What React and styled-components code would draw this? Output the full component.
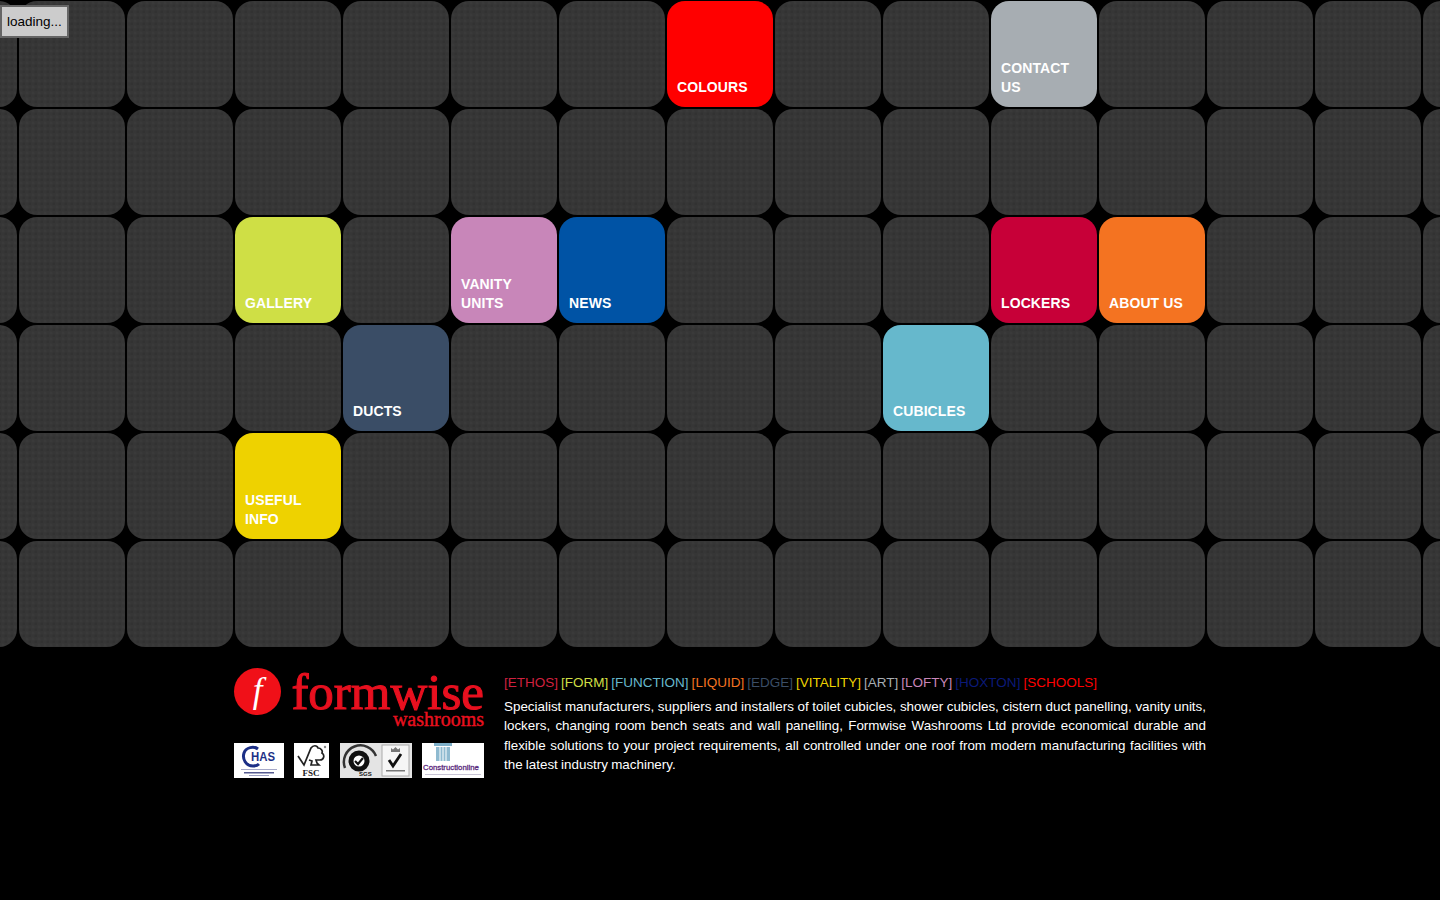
import styled, { createGlobalStyle } from "styled-components";

const GlobalStyle = createGlobalStyle`
  html, body {
    margin: 0;
    padding: 0;
    height: 100%;
    background: #000;
    overflow: hidden;
    font-family: "Liberation Sans", Arial, sans-serif;
  }
`;

const Page = styled.div`
  position: relative;
  width: 1440px;
  height: 900px;
  overflow: hidden;
`;

const Loading = styled.div`
  position: absolute;
  top: 5px;
  left: 0;
  box-sizing: border-box;
  width: 69px;
  height: 33px;
  padding-left: 5px;
  background: #ccc;
  border: 2px solid #666;
  color: #000;
  font-size: 13.5px;
  line-height: 29px;
`;

const Grid = styled.div`
  display: grid;
  grid-template-columns: repeat(15, 108px);
  grid-auto-rows: 108px;
  justify-content: center;
  margin: 0 -90px;
`;

const Tile = styled.a`
  margin: 1px;
  box-sizing: border-box;
  display: flex;
  align-items: flex-end;
  padding: 10px;
  border-radius: 18px;
  background-color: ${(p) => p.$color || "#363636"};
  background-image: ${(p) =>
    p.$color
      ? "none"
      : `radial-gradient(circle at 2px 2px, #3a3a3a 1px, transparent 2px),
         radial-gradient(circle at 5px 5px, #323232 1px, transparent 2px)`};
  background-size: 6px 6px;
  color: #fff;
  font-size: 14px;
  font-weight: bold;
  line-height: 19px;
  letter-spacing: 0.1px;
  text-transform: uppercase;
`;

const Footer = styled.div`
  display: flex;
  gap: 20px;
  width: 972px;
  margin: 20px 0 0 234px;
`;

const Brand = styled.div`
  width: 250px;
  flex: none;
  display: flex;
  flex-direction: column;
  gap: 14px;
`;

const Logo = styled.div`
  display: flex;
  align-items: flex-start;
  height: 61px;
  gap: 10px;
`;

const LogoMark = styled.div`
  width: 47px;
  height: 47px;
  flex: none;
  border-radius: 50%;
  background: #f01018;
  color: #fff;
  font-family: "Liberation Serif", serif;
  font-style: italic;
  font-size: 35px;
  line-height: 46px;
  text-align: center;
`;

const LogoWords = styled.div`
  display: flex;
  flex-direction: column;
  align-items: flex-end;
  flex: 1;
  padding-top: 5px;
  color: #e8101f;
  font-family: "Liberation Serif", serif;
`;

const LogoName = styled.div`
  font-size: 51px;
  line-height: 38px;
  -webkit-text-stroke: 1.1px #e8101f;
  white-space: nowrap;
`;

const LogoSub = styled.div`
  margin-top: 2px;
  font-size: 20px;
  line-height: 12px;
  -webkit-text-stroke: 0.4px #e8101f;
`;

const Badges = styled.div`
  display: flex;
  justify-content: space-between;
`;

const Badge = styled.div`
  width: ${(p) => p.$width}px;
  height: 35px;
  background: #fff;
`;

const Copy = styled.div`
  flex: 1;
  padding-top: 7px;
`;

const Tags = styled.div`
  display: flex;
  gap: 3px;
  font-size: 13.5px;
  line-height: 16px;
  margin-bottom: 6px;
`;

const Tag = styled.span`
  color: ${(p) => p.$color};
`;

const Text = styled.p`
  margin: 0;
  color: #fff;
  font-size: 13.4px;
  line-height: 19.3px;
  word-spacing: -0.5px;
  text-align: justify;
`;

const tiles = {
  7: ["Colours", "#ff0000"],
  10: ["Contact Us", "#a7adb2"],
  33: ["Gallery", "#cfdf45"],
  35: ["Vanity Units", "#c886b9"],
  36: ["News", "#0053a5"],
  40: ["Lockers", "#c70038"],
  41: ["About Us", "#f47321"],
  49: ["Ducts", "#3a4d66"],
  54: ["Cubicles", "#66b8cc"],
  63: ["Useful Info", "#eed200"],
};

const tags = [
  ["ETHOS", "#d0213f"],
  ["FORM", "#cfdf45"],
  ["FUNCTION", "#66b8cc"],
  ["LIQUID", "#f47321"],
  ["EDGE", "#3a4d66"],
  ["VITALITY", "#eed200"],
  ["ART", "#a7adb2"],
  ["LOFTY", "#c886b9"],
  ["HOXTON", "#0b1a78"],
  ["SCHOOLS", "#ff0000"],
];

const Chas = () => (
  <svg width="50" height="35" viewBox="0 0 50 35">
    <path d="M24 6C20 3 12 4 10 10c-2 6 2 13 9 13 3 0 5-1 6-2" fill="none" stroke="#1c2f86" strokeWidth="3" />
    <text x="17" y="18" fontFamily="Liberation Sans" fontWeight="bold" fontSize="13" fill="#1c2f86" textLength="24" lengthAdjust="spacingAndGlyphs">
      HAS
    </text>
    <rect x="7" y="26" width="36" height="1" fill="#a5a8c8" />
    <rect x="10" y="29" width="30" height="1.5" fill="#555a90" />
    <rect x="15" y="32" width="20" height="1" fill="#9a9dc0" />
  </svg>
);

const Fsc = () => (
  <svg width="35" height="35" viewBox="0 0 35 35">
    <path d="M4 13l6 9 7-17c2-3 6-3 7 0 3 0 5 3 4 5 3 2 2 7-2 7h-4l1 3 2 2h-8l1-4-3-1" fill="none" stroke="#222" strokeWidth="1.7" />
    <circle cx="31" cy="4" r="1.2" fill="#888" />
    <text x="17" y="33" textAnchor="middle" fontFamily="Liberation Serif" fontWeight="bold" fontSize="9" fill="#222">
      FSC
    </text>
  </svg>
);

const Sgs = () => (
  <svg width="72" height="35" viewBox="0 0 72 35">
    <rect width="72" height="35" fill="#e4e4e4" />
    <rect x="42" y="2" width="27" height="31" fill="#f6f6f6" stroke="#aaa" />
    <path d="M5 25A16 16 0 0 1 36 13" fill="none" stroke="#333" strokeWidth="2.5" />
    <circle cx="19" cy="18" r="8" fill="#fff" stroke="#111" strokeWidth="5" />
    <path d="M15 18l3 3 5-6" fill="none" stroke="#111" strokeWidth="2.2" />
    <text x="19" y="33" fontFamily="Liberation Sans" fontWeight="bold" fontSize="6" fill="#111">
      SGS
    </text>
    <path d="M49 17l4 6 8-12" fill="none" stroke="#111" strokeWidth="2.8" />
    <path d="M51 9V5l2 1.5 2.5-2.5 2.5 2.5 2-1.5v4z" fill="#777" />
    <rect x="46" y="27" width="19" height="1.5" fill="#777" />
  </svg>
);

const Construction = () => (
  <svg width="62" height="35" viewBox="0 0 62 35">
    <rect x="12" y="0" width="18" height="3" fill="#7fb0c9" />
    <rect x="14" y="4" width="14" height="14" fill="#8fbad0" />
    <path d="M18 4v14M21 4v14M24 4v14" stroke="#fff" strokeWidth="1" />
    <text x="1" y="27" fontFamily="Liberation Sans" fontSize="7.8" fill="#5b2a7e" stroke="#5b2a7e" strokeWidth="0.3">
      Constructionline
    </text>
    <rect x="3" y="31" width="56" height="1" fill="#c8c4d4" />
  </svg>
);

export default function App() {
  return (
    <Page>
      <GlobalStyle />
      <Grid>
        {Array.from({ length: 90 }, (_, i) => (
          <Tile key={i} $color={tiles[i]?.[1]}>
            {tiles[i] ? <span>{tiles[i][0]}</span> : null}
          </Tile>
        ))}
      </Grid>
      <Footer>
        <Brand>
          <Logo>
            <LogoMark>f</LogoMark>
            <LogoWords>
              <LogoName>formwise</LogoName>
              <LogoSub>washrooms</LogoSub>
            </LogoWords>
          </Logo>
          <Badges>
            <Badge $width={50}><Chas /></Badge>
            <Badge $width={35}><Fsc /></Badge>
            <Badge $width={72}><Sgs /></Badge>
            <Badge $width={62}><Construction /></Badge>
          </Badges>
        </Brand>
        <Copy>
          <Tags>
            {tags.map(([name, color]) => (
              <Tag key={name} $color={color}>[{name}]</Tag>
            ))}
          </Tags>
          <Text>
            Specialist manufacturers, suppliers and installers of toilet cubicles, shower cubicles, cistern duct
            panelling, vanity units, lockers, changing room bench seats and wall panelling, Formwise Washrooms Ltd
            provide economical durable and flexible solutions to your project requirements, all controlled under one
            roof from modern manufacturing facilities with the latest industry machinery.
          </Text>
        </Copy>
      </Footer>
      <Loading>loading...</Loading>
    </Page>
  );
}
